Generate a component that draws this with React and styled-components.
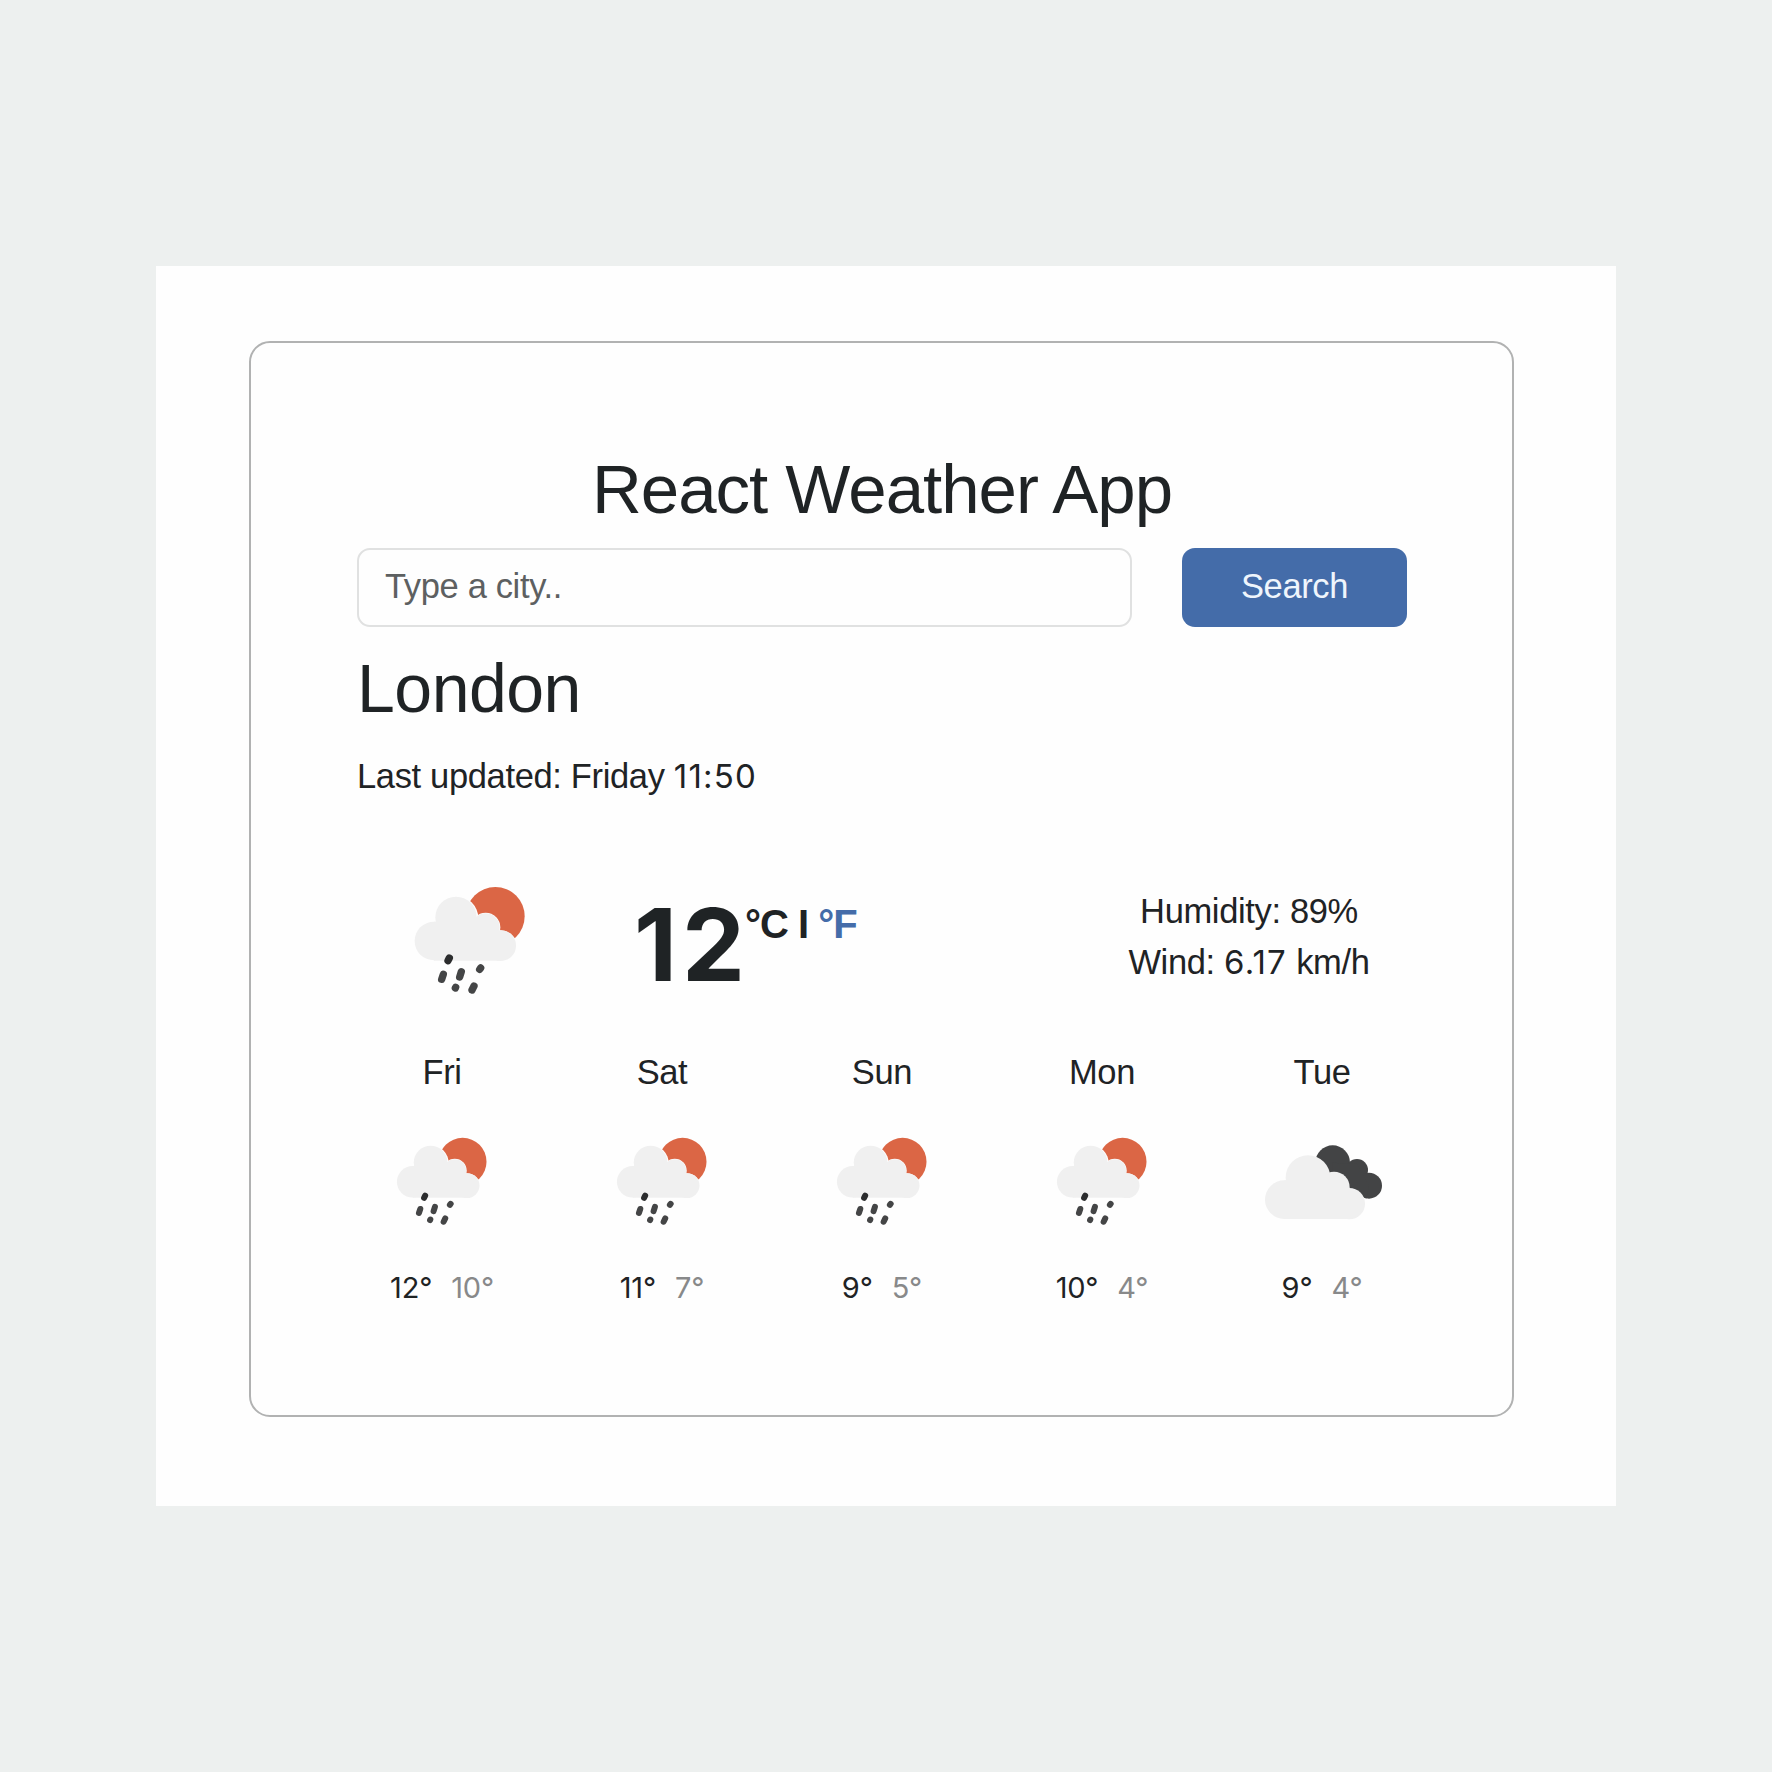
import React from "react";
import styled, { createGlobalStyle } from "styled-components";

const GlobalStyle = createGlobalStyle`
  *, *::before, *::after { box-sizing: border-box; }
  body {
    margin: 0;
    background: #edf0ef;
    color: #1f2325;
    font-family: "Liberation Sans", Arial, Helvetica, sans-serif;
    font-size: 34.5px;
    line-height: 51px;
    letter-spacing: -0.35px;
  }
`;

const Page = styled.main`
  min-height: 1772px;
  padding: 266px 156px;
`;

const Panel = styled.div`
  width: 1460px;
  height: 1240px;
  padding: 75px 0 0 93px;
  background: #fefefe;
`;

const Card = styled.section`
  width: 1265px;
  height: 1076px;
  padding: 106px 105px 0 106px;
  border: 2px solid #b1b2b2;
  border-radius: 21px;
`;

const Title = styled.h1`
  margin: 0 0 16.5px;
  font-size: 69px;
  line-height: 82px;
  font-weight: 400;
  text-align: center;
  letter-spacing: -1px;
  white-space: nowrap;
`;

const SearchForm = styled.form`
  display: grid;
  grid-template-columns: 775px 225px;
  justify-content: space-between;
  height: 79.5px;
`;

const CityInput = styled.input`
  padding: 0 26px 1px;
  border: 2px solid #e0e1e1;
  border-radius: 13px;
  background: #fefefe;
  color: inherit;
  font: inherit;
  letter-spacing: inherit;
  outline: none;
  &::placeholder { color: #5d6061; opacity: 1; }
`;

const SearchButton = styled.button`
  padding: 0 0 1px;
  border: 0;
  border-radius: 13px;
  background: #446ca9;
  color: #eff5fc;
  font: inherit;
  letter-spacing: inherit;
`;

const City = styled.h2`
  margin: 20px 0 22px;
  font-size: 68px;
  line-height: 82px;
  font-weight: 400;
  letter-spacing: -0.5px;
`;

const Updated = styled.p`
  margin: 0;
  white-space: nowrap;
`;

const Num = styled.span`
  font-family: Inter, "Liberation Sans", sans-serif;
  font-size: 33px;
  line-height: 1;
  letter-spacing: 1.2px;
`;

const Current = styled.div`
  display: grid;
  grid-template-columns: 274px 460px 316px;
  height: 140px;
  margin-top: 68px;
`;

const CurrentIcon = styled.div`
  padding-left: 43px;
`;

const Temperature = styled.div`
  display: flex;
  align-items: flex-start;
  padding-top: 20px;
  font-weight: 700;
`;

const Degrees = styled.span`
  width: 113px;
  padding-left: 3px;
  font-family: Inter, "Liberation Sans", sans-serif;
  font-size: 100px;
  line-height: 109px;
  letter-spacing: 5px;
  white-space: nowrap;
`;

const Units = styled.span`
  padding: 9px 0 0 1px;
  font-size: 40px;
  line-height: 50px;
  letter-spacing: -1px;
  white-space: pre;
`;

const UnitLink = styled.span`
  color: #446ca9;
`;

const Details = styled.div`
  padding-top: 16px;
  text-align: center;
  white-space: nowrap;
`;

const Forecast = styled.div`
  display: grid;
  grid-template-columns: repeat(5, 220px);
  margin: 37px -25px 0;
`;

const Day = styled.div`
  display: flex;
  flex-direction: column;
  align-items: center;
`;

const DayIcon = styled.div`
  height: 114px;
  margin: 26px 0 28px;
`;

const Range = styled.div`
  display: flex;
  gap: 19px;
  font-family: Inter, "Liberation Sans", sans-serif;
  font-size: 29px;
  line-height: 44px;
  letter-spacing: -0.2px;
`;

const Low = styled.span`
  color: #88898a;
`;

const Drawing = styled.svg`
  display: block;
`;

function RainIcon({ size }) {
  return (
    <Drawing width={size} height={size} viewBox="0 0 420 420">
      <circle cx="286" cy="139" r="88" fill="#db6645" />
      <g fill="#fefefe">
        <circle cx="168" cy="145" r="67" />
        <circle cx="257" cy="172" r="44" />
        <circle cx="302" cy="230" r="49" />
      </g>
      <g fill="#f0f0f0">
        <circle cx="102" cy="213" r="58" />
        <circle cx="168" cy="142" r="62" />
        <circle cx="257" cy="172" r="42" />
        <circle cx="302" cy="227" r="46" />
        <path d="M102 155H270L302 200V272H102Z" />
      </g>
      <g stroke="#444546" strokeWidth="22" strokeLinecap="round">
        <path d="M148 264L144 272" stroke="#2b2c2d" />
        <path d="M130 313L125 328" />
        <path d="M184 305L179 321" />
        <path d="M242 294L239 298" />
        <path d="M167 352L166 354" />
        <path d="M222 348L216 360" />
      </g>
    </Drawing>
  );
}

function CloudsIcon() {
  return (
    <Drawing width="126" height="114" viewBox="86 252 378 342">
      <g fill="#434445">
        <circle cx="307" cy="368" r="52" />
        <circle cx="380" cy="390" r="33" />
        <circle cx="416" cy="437" r="39" />
        <path d="M307 368L380 372L416 437L408 476L307 420Z" />
      </g>
      <g fill="#f0f0f0">
        <circle cx="162" cy="479" r="58" />
        <circle cx="233" cy="413" r="67" />
        <circle cx="311" cy="442" r="47" />
        <circle cx="357" cy="491" r="47" />
        <path d="M162 421H300L357 460V537H162Z" />
      </g>
    </Drawing>
  );
}

const days = [
  { name: "Fri", high: 12, low: 10, icon: "rain" },
  { name: "Sat", high: 11, low: 7, icon: "rain" },
  { name: "Sun", high: 9, low: 5, icon: "rain" },
  { name: "Mon", high: 10, low: 4, icon: "rain" },
  { name: "Tue", high: 9, low: 4, icon: "clouds" },
];

export default function App() {
  return (
    <>
      <GlobalStyle />
      <Page>
        <Panel>
          <Card>
            <Title>React Weather App</Title>
            <SearchForm>
              <CityInput placeholder="Type a city.." />
              <SearchButton type="button">Search</SearchButton>
            </SearchForm>
            <City>London</City>
            <Updated>
              Last updated: Friday <Num>11:50</Num>
            </Updated>
            <Current>
              <CurrentIcon>
                <RainIcon size={140} />
              </CurrentIcon>
              <Temperature>
                <Degrees>12</Degrees>
                <Units>
                  °C I <UnitLink>°F</UnitLink>
                </Units>
              </Temperature>
              <Details>
                <div>Humidity: 89%</div>
                <div>
                  Wind: <Num>6.17</Num> km/h
                </div>
              </Details>
            </Current>
            <Forecast>
              {days.map((day) => (
                <Day key={day.name}>
                  <div>{day.name}</div>
                  <DayIcon>
                    {day.icon === "rain" ? <RainIcon size={114} /> : <CloudsIcon />}
                  </DayIcon>
                  <Range>
                    <span>{day.high}°</span>
                    <Low>{day.low}°</Low>
                  </Range>
                </Day>
              ))}
            </Forecast>
          </Card>
        </Panel>
      </Page>
    </>
  );
}
